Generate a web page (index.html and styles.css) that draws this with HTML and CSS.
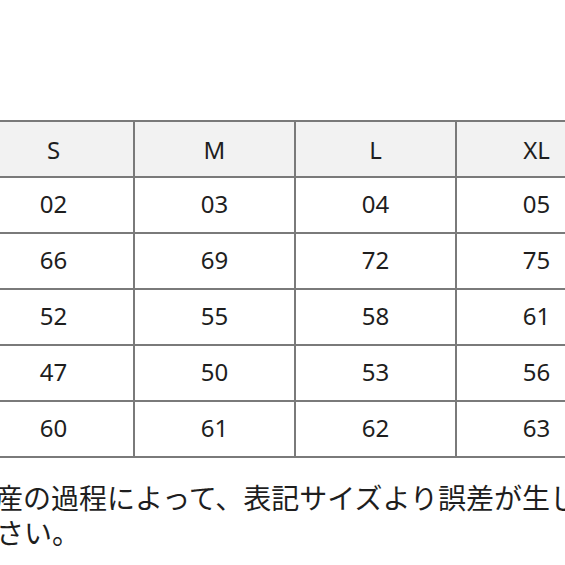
FILE: index.html
```html
<!DOCTYPE html>
<html lang="ja">
<head>
<meta charset="utf-8">
<title>サイズ表</title>
<link rel="stylesheet" href="styles.css">
</head>
<body>
<div class="page">
  <table class="size-table">
    <thead>
      <tr><th>S</th><th>M</th><th>L</th><th>XL</th></tr>
    </thead>
    <tbody>
      <tr><td>02</td><td>03</td><td>04</td><td>05</td></tr>
      <tr><td>66</td><td>69</td><td>72</td><td>75</td></tr>
      <tr><td>52</td><td>55</td><td>58</td><td>61</td></tr>
      <tr><td>47</td><td>50</td><td>53</td><td>56</td></tr>
      <tr><td>60</td><td>61</td><td>62</td><td>63</td></tr>
    </tbody>
  </table>
  <p class="note">産の過程によって、表記サイズより誤差が生じ<br>さい。</p>
</div>
</body>
</html>
```
FILE: styles.css
```css
html, body {
  margin: 0;
  padding: 0;
  background: #ffffff;
  overflow: hidden;
}
.page {
  width: 565px;
  height: 565px;
  overflow: hidden;
  padding-top: 120px;
  box-sizing: border-box;
}
.size-table {
  border-collapse: collapse;
  margin-left: -28px;
  table-layout: fixed;
  width: 646px;
  font-family: "Noto Sans", "Open Sans", sans-serif;
  font-size: 24px;
  color: #1e1e1e;
}
.size-table th,
.size-table td {
  border: 2px solid #7a7a7a;
  width: 161px;
  height: 56px;
  padding: 0;
  text-align: center;
  vertical-align: middle;
  box-sizing: border-box;
  font-weight: normal;
}
.size-table td {
  padding-bottom: 3px;
}
.size-table th {
  background: #f2f2f2;
}
.note {
  margin: 22px 0 0 -4px;
  font-family: "Noto Sans CJK JP", "Noto Sans", sans-serif;
  font-size: 28px;
  line-height: 35px;
  color: #1e1e1e;
  white-space: nowrap;
  text-indent: -1px;
}
```
